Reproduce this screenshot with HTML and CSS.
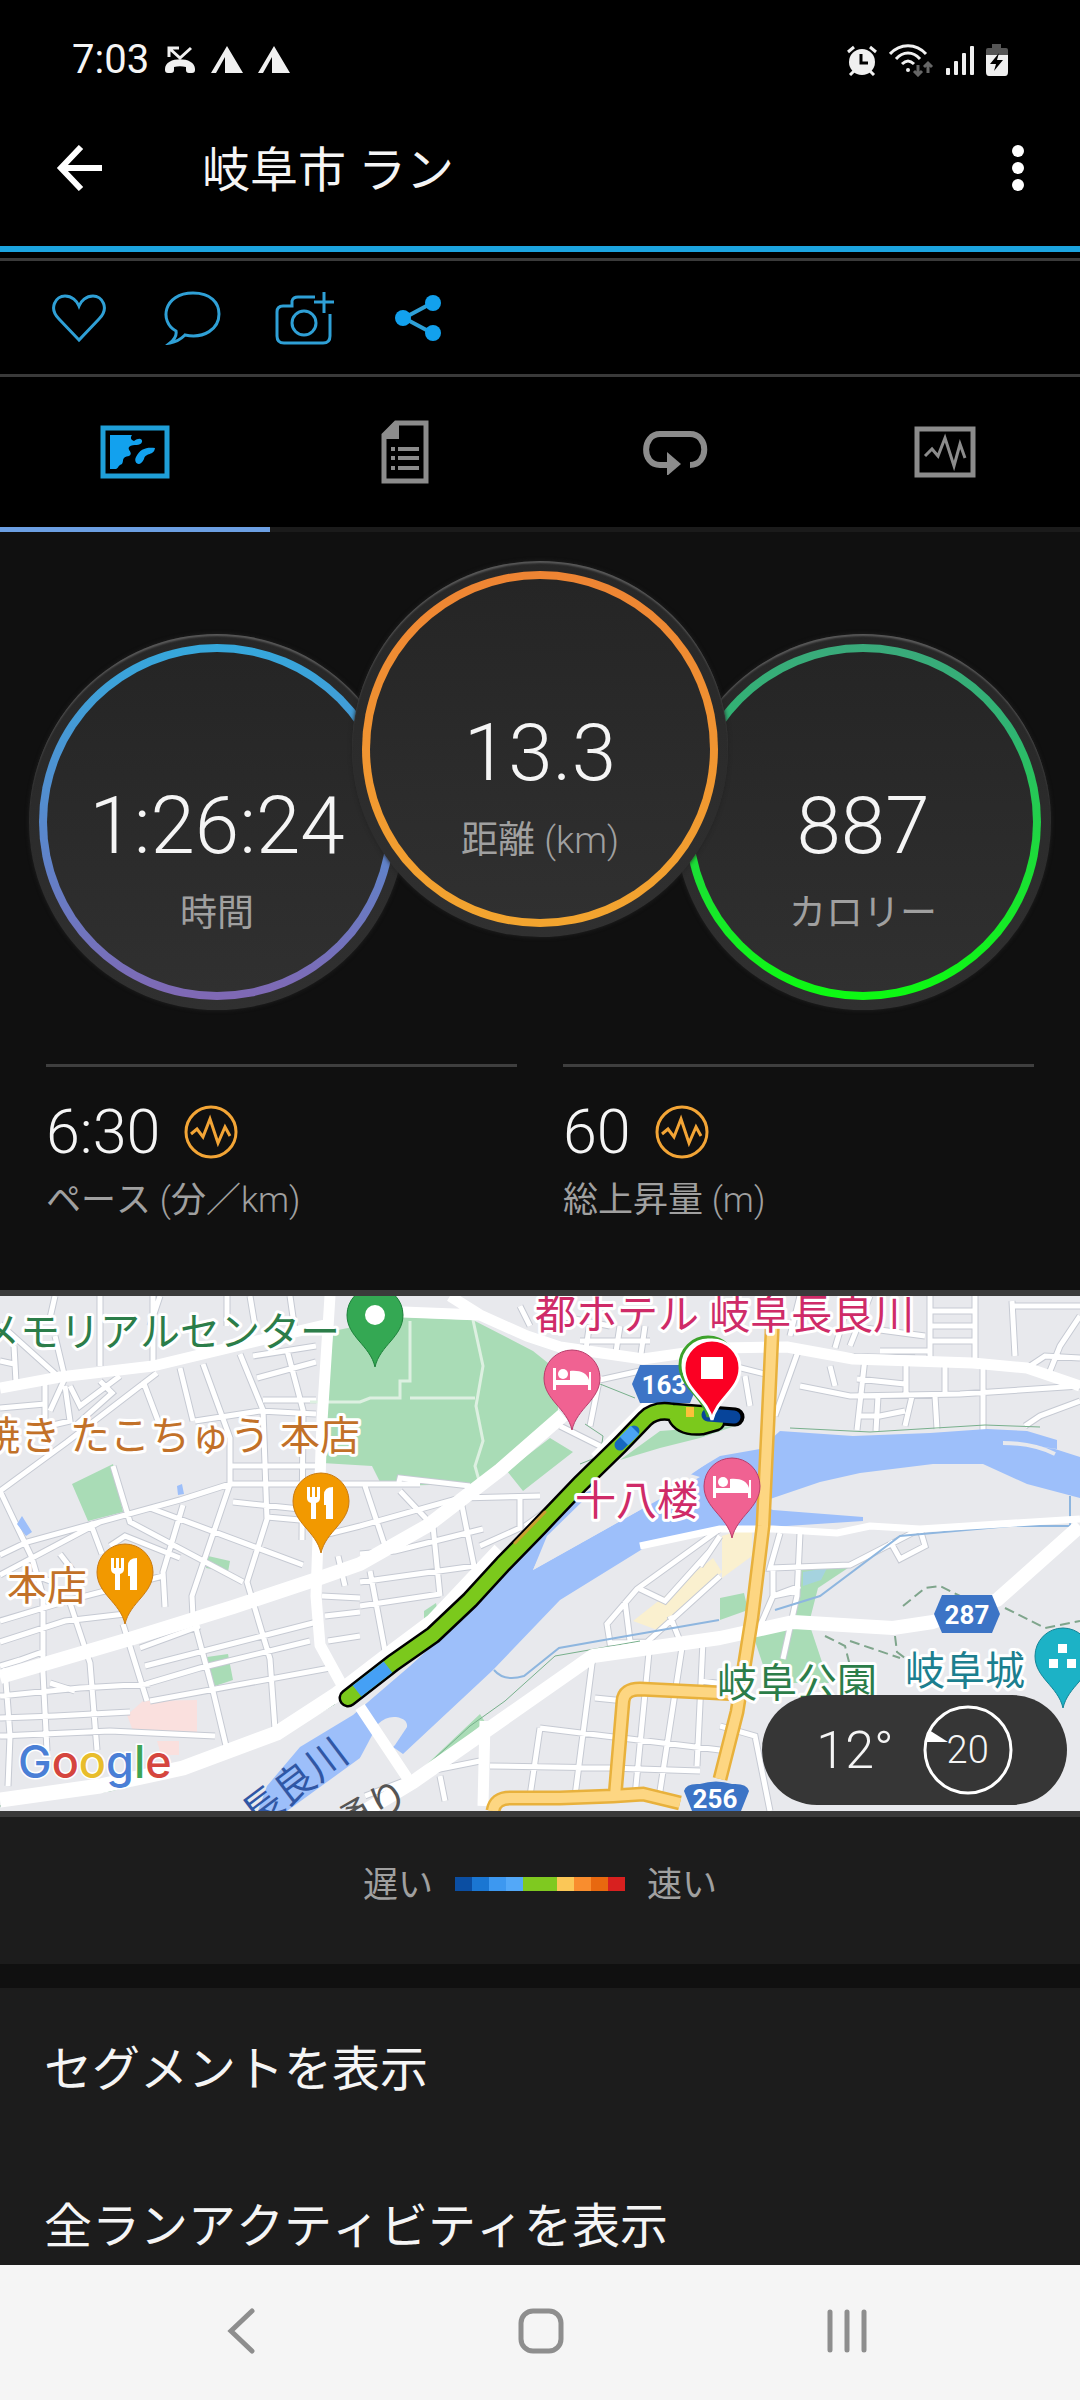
FILE: index.html
```html
<!DOCTYPE html>
<html lang="ja">
<head>
    <meta charset="UTF-8">
    <meta name="viewport" content="width=device-width, initial-scale=1.0">
    <title>岐阜市 ラン</title>
    <link rel="stylesheet" href="styles.css">
</head>
<body>
    <div class="status-bar">
        <div class="status-left">
            <span class="clock">7:03</span>
            <svg width="32" height="32" viewBox="0 0 32 32" fill="none" stroke="#f0f0f0" stroke-width="3">
                <path d="M5 13V4h10M5 4l11 10L27 4"/>
                <path d="M1 25c0-13 30-13 30 0v1c0 2-1 3-3 3h-3c-2 0-3-1-3-3v-3c-4-1-8-1-12 0v3c0 2-1 3-3 3H4c-2 0-3-1-3-3z" fill="#f0f0f0" stroke="none"/>
            </svg>
            <svg width="32" height="32" viewBox="0 0 32 32" fill="#f0f0f0"><path d="M16 2l16 27H14V13L5 29H0z"/></svg>
            <svg width="32" height="32" viewBox="0 0 32 32" fill="#f0f0f0"><path d="M16 2l16 27H14V13L5 29H0z"/></svg>
        </div>
        <div class="status-right">
            <svg width="30" height="32" viewBox="0 0 30 32" fill="none" stroke="#f0f0f0" stroke-width="4">
                <circle cx="15" cy="18" r="13" fill="#f0f0f0" stroke="none"/>
                <path d="M1 8l6-5M29 8l-6-5M3 31l4-4M27 31l-4-4" stroke-width="3"/>
                <path d="M14 10v9h7" stroke="#000" stroke-width="3"/>
            </svg>
            <svg width="45" height="34" viewBox="0 0 45 34" fill="none" stroke="#f0f0f0" stroke-width="3">
                <path d="M1 11c10-11 26-11 36 0M7 16c7-8 17-8 24 0M13 21c4-4 8-4 12 0"/>
                <circle cx="19" cy="27" r="2" fill="#f0f0f0" stroke="none"/>
                <path d="M29 22v10m-4-4l4 4 4-4M39 30V20m-4 4l4-4 4 4" stroke="#666"/>
            </svg>
            <svg width="28" height="32" viewBox="0 0 28 32" fill="#f0f0f0">
                <rect y="24" width="4" height="7" rx="1"/><rect x="8" y="17" width="4" height="14" rx="1"/>
                <rect x="16" y="9" width="4" height="22" rx="1"/><rect x="24" y="2" width="4" height="29" rx="1"/>
            </svg>
            <svg width="22" height="34" viewBox="0 0 22 34">
                <path d="M6 1h9v4h5q2 0 2 2v6H0V7q0-2 2-2h4z" fill="#555"/>
                <path d="M0 12h22v17q0 4-3 4H3q-3 0-3-4z" fill="#f0f0f0"/>
                <path d="M13 10L4 21h6L8 28l9-11h-6z"/>
            </svg>
        </div>
    </div>

    <header class="header">
        <button class="icon-button" aria-label="戻る">
            <svg width="46" height="46" viewBox="0 0 46 46" fill="none" stroke="#fff" stroke-width="6"><path d="M25 2L5 23l20 21M5 23h41"/></svg>
        </button>
        <h1>岐阜市 ラン</h1>
        <button class="icon-button" aria-label="メニュー">
            <svg width="12" height="48" viewBox="0 0 12 48" fill="#fff"><circle cx="6" cy="7" r="6"/><circle cx="6" cy="24" r="6"/><circle cx="6" cy="41" r="6"/></svg>
        </button>
    </header>

    <div class="actions">
        <button aria-label="いいね">
            <svg width="56" height="54" viewBox="0 0 56 54"><path d="M28 49L8 28C-3 17 5 5 14 5c7 0 12 5 14 10 2-5 7-10 14-10 9 0 17 12 6 23z"/></svg>
        </button>
        <button aria-label="コメント">
            <svg width="58" height="54" viewBox="0 0 58 54"><path d="M7 52c5-4 7-7 6-12C-4 31 0 2 30 2c18 0 26 10 26 21 0 15-15 25-34 21-4 4-9 7-15 8z"/></svg>
        </button>
        <button aria-label="写真を追加">
            <svg width="62" height="56" viewBox="0 0 62 56"><path d="M41 7H24q-5 0-6 4v5H9q-6 0-6 6v24q0 7 7 7h39q7 0 7-7V24M50 2v21M40 12h20"/><circle cx="30" cy="33" r="12"/></svg>
        </button>
        <button aria-label="共有">
            <svg width="46" height="48" viewBox="0 0 46 48"><path d="M37 9L9 24l28 15" stroke-width="4"/><g fill="#12a1ee" stroke="none"><circle cx="38" cy="9" r="8"/><circle cx="8" cy="24" r="8"/><circle cx="38" cy="39" r="8"/></g></svg>
        </button>
    </div>

    <nav class="tabs">
        <button class="tab active" aria-label="マップ">
            <svg width="70" height="54" viewBox="0 0 70 54">
                <rect x="3" y="3" width="64" height="48" fill="none" stroke="#1f9fd8" stroke-width="5"/>
                <path d="M10 10h22c-2 3-1 5 2 6 5-4 9-2 8 1-2 5-8 1-13 5-2 3 5 6 0 9-8 1-5 5-7 8-5 2-3 4-6 5h-6z" fill="#12a1ee"/>
                <path d="M55 23c-1 8-9 4-11 11-4 9-11 4-8-2 4-8 10-10 19-9z" fill="#12a1ee"/>
            </svg>
        </button>
        <button class="tab" aria-label="詳細">
            <svg width="48" height="64" viewBox="0 0 48 64" fill="none" stroke="#8c8c8c" stroke-width="5">
                <path d="M15 3h30v58H3V15z"/><path d="M18 2v17H2v-5L13 2z" fill="#8c8c8c" stroke="none"/>
                <path d="M10 29h4m3 0h21M10 38h4m3 0h21M10 48h4m3 0h21" stroke-width="4"/>
            </svg>
        </button>
        <button class="tab" aria-label="ラップ">
            <svg width="66" height="46" viewBox="0 0 66 46" fill="none" stroke="#8c8c8c" stroke-width="6">
                <path d="M26 36H18C-1 36 0 5 18 5h30c19 0 19 31 0 31"/><path d="M25 23l14 12-14 12z" fill="#8c8c8c" stroke="none"/>
            </svg>
        </button>
        <button class="tab" aria-label="チャート">
            <svg width="62" height="52" viewBox="0 0 62 52" fill="none" stroke="#8c8c8c">
                <rect x="3" y="3" width="56" height="46" stroke-width="5"/><path d="M11 30l7-7 6 7 7-18 9 28 6-22 5 14" stroke-width="3"/>
            </svg>
        </button>
    </nav>

    <main class="content">
        <section class="gauges">
            <div class="gauge">
                <div class="ring ring-time"><span class="value">1:26:24</span><span class="label">時間</span></div>
            </div>
            <div class="gauge gauge-main">
                <div class="ring ring-distance"><span class="value">13.3</span><span class="label">距離 <span class="unit">(km)</span></span></div>
            </div>
            <div class="gauge">
                <div class="ring ring-calories"><span class="value">887</span><span class="label">カロリー</span></div>
            </div>
        </section>

        <section class="stats">
            <div class="stat">
                <div class="stat-value">6:30
                    <svg width="54" height="54" viewBox="0 0 54 54" fill="none" stroke="#f3a536" stroke-width="3"><circle cx="27" cy="27" r="25"/><path d="M7 29l6-5 6 8 7-18 8 24 7-16 5 9"/></svg>
                </div>
                <div class="label">ペース <span class="unit">(</span>分／<span class="unit">km)</span></div>
            </div>
            <div class="stat">
                <div class="stat-value">60
                    <svg width="54" height="54" viewBox="0 0 54 54" fill="none" stroke="#f3a536" stroke-width="3"><circle cx="27" cy="27" r="25"/><path d="M7 29l6-5 6 8 7-18 8 24 7-16 5 9"/></svg>
                </div>
                <div class="label">総上昇量 <span class="unit">(m)</span></div>
            </div>
        </section>

        <section class="map">
            <svg class="map-canvas" viewBox="0 0 1080 515" preserveAspectRatio="xMidYMid slice">
                <defs>
                    <path id="pin" d="M0 52C-5 30-28 22-28 0A28 28 0 1 1 28 0C28 22 5 30 0 52Z"/>
                    <path id="fork" fill="#fff" d="M-14-14h3v10h2v-10h3v10h2v-10h3V-3q0 4-4 5v16h-5V2q-4-1-4-5zM5 18V4H3V-6q0-8 9-8v32z"/>
                    <g id="bed" fill="#fff"><path d="M-19-10h3V2h33v-8h2v18h-3V7h-32v5h-3z"/><circle cx="-9" cy="-4" r="5"/><path d="M-2 2v-9C8-8 15-5 17 2z"/></g>
                    <path id="badge" d="M-25-19h50L33 0 25 19h-50L-33 0z"/>
                    <path id="trunk" d="M773 0L772 37 768 125 763 230 752 321 737 416 720 483M493 515Q495 502 510 502L560 502 613 500 643 498 680 507M615 500L623 405Q624 393 640 393L720 397 740 398"/>
                    <path id="streets" d="M0 195L67 146 157 77M0 259L27 246 180 204 230 188M0 195L32 262 43 300V377L47 455M0 279L100 226M113 170L130 226 243 286M150 212L303 269M183 209L163 276 165 311M230 188L192 300 193 321 213 395 227 454M203 68L230 142V188M180 72L193 125M240 58L263 114 267 223 247 286 270 363 275 433M287 54L303 114 302 244M253 60L316 50M257 82L316 66M263 104H316M195 125L260 115 316 118M230 170H322M230 188H420M233 206L300 213M267 221L300 224M70 307L90 367 97 454M90 226L102 258M123 328L147 405M0 325L70 304 163 280M0 346L65 325 125 318M0 370L20 364 45 355M50 387L75 395M140 352L200 330M145 370L317 326M146 388L200 372 310 345M150 405L330 372M0 400L80 392 150 388M0 422L55 420 130 416M0 440L110 435 215 440M5 372L10 440 8 490M55 40L65 82 50 115M0 28L60 82M14 50L16 86M0 65L14 68M100 0V70M153 0V70M227 0V30M250 0L255 30M290 0L295 35M45 85V130M65 90L70 125 40 132M70 90L80 110 120 80M0 112L45 108M100 85L112 97 75 130M143 85L160 130M160 0L150 30M55 0L50 22M60 258L80 284M28 277L50 285M110 250L125 240 180 262M365 190L385 250M400 195L433 230 440 300M460 200L475 275M360 230L460 202 540 200M360 258L395 255 483 233M360 286L475 270M360 310L440 298M370 275L385 355M520 200V232L480 250M525 230L560 205M398 190L400 182 470 190M322 300L360 302M325 320L360 316M328 345L360 340M338 260L345 290M320 240L360 230M540 0L550 30M590 25L585 60M620 30L615 62M645 30L640 65M580 45H650M560 20L610 30M520 10L530 30M600 80L590 130M560 130L600 150M640 75L595 85M800 50L775 120M733 70L765 78M745 80L750 110M800 90L850 100 960 98 1080 90M865 62L857 134M906 65V98M945 70L945 98M983 72L983 135M935 100L937 133M878 100L876 135M912 100L905 130M857 83L905 88M857 120H880L905 115M835 52L845 18 840 0M850 50L870 0M880 55L930 55M930 0V65M975 0L975 65M1012 5L1015 60M930 15H975M930 30H975M930 45H975M800 0L790 40M1010 10L1080 10M1080 20L1060 50 1050 75M1027 72L1045 60 1080 62M1025 130L1040 120 1080 105M830 70L835 90M850 30L925 40M835 60L915 62M800 237L797 300 783 363M773 300L797 295M773 272V300L760 330M780 237L770 272 850 269 920 233M773 300L800 290M890 245L900 263 925 250 920 233M593 360L575 500M650 346L635 500M683 345L660 495M703 345L697 470M540 432L720 454M490 470L610 472 700 475M540 432L530 500M595 402L625 405M700 385L725 388M720 430L755 440 770 515M365 500L430 475 480 465M440 480L445 505M720 233L637 293 607 328 610 347 647 346 720 280M625 305L630 345M640 293L665 305 710 255M670 320L680 345M720 240L700 270"/>
                </defs>
                <rect width="1080" height="515" fill="#e8e9ed"/>

                <!-- parks -->
                <g fill="#a9dcb6">
                    <path d="M333 35L403 21 473 24 533 55 558 75V118L477 188 382 190 372 170 322 167z"/>
                    <path d="M550 142L573 156 523 195 507 175zM72 188L113 168 123 216 88 225zM208 260l22 5-2 11-22-4zM207 361l21-3 5 26-21 7z"/>
                    <path d="M620 164L660 135 700 132 735 130 700 142 660 152zM408 486L480 418 485 426 420 478zM800 272h48l-30 20-9 35 20 60h-60l-15-45 38-20z"/>
                    <path d="M720 302l24-5 4 17-28 10zM424 315l12-8 2 10-14 12z"/>
                </g>
                <path d="M633 325L713 262 722 276 660 335zM722 240l30-10v30l-30 22z" fill="#faf0cf"/>
                <path d="M127 419l16-14 54-1v33l-64-2zM157 445h22v14h-18z" fill="#fae0de"/>
                <path d="M803 276l24-4-6 12-18 6z" fill="#a5d3df"/>

                <!-- side streets -->
                <use href="#streets" fill="none" stroke="#c6cad3" stroke-width="7"/>
                <use href="#streets" fill="none" stroke="#fff" stroke-width="5"/>

                <!-- river -->
                <g fill="#9dbffa">
                    <path d="M1080 161L1055 153 1010 146 1057 153V144L1027 135 987 133 930 137 853 140 780 135 760 153 720 160 690 178 700 181 640 214 533 274 547 240 590 198 600 192 580 198 533 245 470 315 410 370 375 400 353 419 300 451 267 490 258 515H287L360 462 393 423 407 430 393 451 403 458 493 374 560 304 657 244 700 235 787 230 863 225V221L773 214 757 208 773 202 820 186 860 177 933 168 983 168 1027 188 1080 202z"/>
                    <path d="M17 228l5-8 10 16-6 4zM177 190l5-2 2 10-6 1z"/>
                </g>
                <path d="M533 274L548 242 600 196 720 150 706 168 640 214z" fill="#e8e9ed"/>
                <path d="M360 462l18-34q8-8 18-7 12 2 11 10l-12 18-8 8z" fill="#e8e9ed"/>
                <path d="M1003 147q30 0 52 11" fill="none" stroke="#e8e9ed" stroke-width="4"/>
                <path d="M494 374q10 12 30 6l35-28 45-8 115-20M775 314l45-14 80-60 110-10h60V200" fill="none" stroke="#8eb6df" stroke-width="2"/>
                <path d="M0 510L110 495 190 475 280 440 335 408M410 485L470 430 505 405 555 360 640 345M790 132L870 136 985 129 1040 131M600 88L635 102M585 128L603 140 600 160 580 168" fill="none" stroke="#78b08c" stroke-width="1"/>
                <path d="M903 310L925 292 940 290 960 300M825 340L845 350 850 370M850 345L900 362M895 340L897 356 905 362M1005 312L1045 332 1080 325" fill="none" stroke="#7fa58c" stroke-width="2" stroke-dasharray="10 5"/>
                <path d="M410 25v60h-10v17h-30l-10 4h-50M410 102h65M473 24L483 70 476 110 483 145 475 170 480 188" fill="none" stroke="#ddf0e1" stroke-width="3"/>

                <!-- main roads -->
                <g fill="none" stroke="#fff" stroke-width="11" stroke-linejoin="round">
                    <path d="M0 92L60 81 153 70 253 46 333 27M330 0L322 125 316 300 320 349 343 391M403 16L480 19 527 40 560 51 643 63 720 52 787 51 853 63 973 67 1027 72 1080 90M450 0L480 19"/>
                    <path d="M0 381L133 342 233 311 317 283 360 268 427 230 500 174 563 119" stroke-width="14"/>
                    <path d="M0 504L100 490 183 472 277 437 337 398 393 355 433 325 500 254" stroke-width="15"/>
                    <path d="M365 515L413 486 593 360 720 342 793 326 893 332 933 326 997 304 1080 230" stroke-width="14"/>
                    <path d="M360 411L410 486M485 425L483 510M595 162L655 102"/>
                    <path d="M640 250L720 233 773 233 837 237 870 230 920 233 1080 223" stroke-width="7"/>
                </g>

                <!-- national roads -->
                <use href="#trunk" fill="none" stroke="#e8b13c" stroke-width="15"/>
                <use href="#trunk" fill="none" stroke="#fdd682" stroke-width="10"/>

                <!-- road numbers -->
                <g fill="#3c74c6">
                    <use href="#badge" x="665" y="88"/>
                    <use href="#badge" x="967" y="318"/>
                    <path d="M684 495Q686 487 700 488 716 483 732 488 747 487 749 495L741 515H692z"/>
                </g>
                <g class="road-number">
                    <text x="664" y="98">163</text>
                    <text x="967" y="328">287</text>
                    <text x="715" y="512">256</text>
                </g>

                <!-- activity track -->
                <g fill="none" stroke-linecap="round" stroke-linejoin="round">
                    <path d="M348 402L393 367 433 339 470 304 503 268 540 230 580 188 620 149 645 123Q655 113 672 116L735 121M676 120Q682 132 702 130L716 126" stroke="#000" stroke-width="19"/>
                    <path d="M348 402L393 367 433 339 470 304 503 268 540 230 580 188 620 149 645 123Q655 113 672 116L712 119M676 120Q682 132 702 130L716 126" stroke="#7bc91c" stroke-width="14"/>
                    <path d="M357 395L388 371" stroke="#45a0f5" stroke-width="14" stroke-linecap="butt"/>
                    <path d="M620 149L634 135" stroke="#1768c0" stroke-width="11"/>
                    <path d="M624 145L635 134" stroke="#4ba4f4" stroke-width="12" stroke-linecap="butt"/>
                    <path d="M515 247L545 216" stroke="#c99f32" stroke-width="3"/>
                    <path d="M686 116H694" stroke="#fbc13a" stroke-width="10" stroke-linecap="butt"/>
                    <path d="M708 119L734 121" stroke="#07449a" stroke-width="13"/>
                </g>

                <!-- places -->
                <g class="place">
                    <text class="park" x="340" y="50" text-anchor="end">メモリアルセンター</text>
                    <text class="food" x="360" y="154" text-anchor="end">焼き たこちゅう 本店</text>
                    <text class="food" x="7" y="304">本店</text>
                    <text class="hotel" x="535" y="33">都ホテル 岐阜長良川</text>
                    <text class="hotel" x="575" y="219">十八楼</text>
                    <text class="park" x="717" y="401">岐阜公園</text>
                    <text class="sight" x="905" y="389">岐阜城</text>
                </g>
                <g class="along">
                    <text class="river" transform="translate(255 535) rotate(-37)">長良川</text>
                    <text transform="translate(343 546) rotate(-30)">通り</text>
                </g>

                <!-- pins -->
                <g transform="translate(321 205)"><use href="#pin" fill="#f29900" stroke="#c97b12"/><use href="#fork"/></g>
                <g transform="translate(125 276)"><use href="#pin" fill="#f29900" stroke="#c97b12"/><use href="#fork"/></g>
                <g transform="translate(375 19)"><use href="#pin" fill="#34a853" stroke="#1b8039"/><circle r="10" fill="#fff"/></g>
                <g transform="translate(572 82)"><use href="#pin" fill="#f06292" stroke="#b83d6b"/><use href="#bed"/></g>
                <g transform="translate(732 190)"><use href="#pin" fill="#f06292" stroke="#b83d6b"/><use href="#bed"/></g>
                <g transform="translate(1063 360)"><use href="#pin" fill="#1cb2c6" stroke="#158496"/><path d="M-5-12h9v9h-9zM-14 3h9v9h-9zM4 3h9v9H4z" fill="#fff"/></g>
                <g transform="translate(708 69)"><use href="#pin" fill="#fff" stroke="#3da22b" stroke-width="3"/></g>
                <g transform="translate(712 72)"><use href="#pin" fill="#fb0023" stroke="#fff" stroke-width="3"/><path d="M-11-11h22v22h-22z" fill="#fff"/></g>

                <text class="google" x="18" y="482"><tspan fill="#4a7fd6">G</tspan><tspan fill="#d5453e">o</tspan><tspan fill="#e8bd2c">o</tspan><tspan fill="#4a7fd6">g</tspan><tspan fill="#3da556">l</tspan><tspan fill="#d5453e">e</tspan></text>
            </svg>
            <div class="weather">
                <span>12°</span>
                <div class="wind">
                    <svg width="90" height="90" viewBox="0 0 90 90"><circle cx="45" cy="45" r="43" fill="none" stroke="#fff" stroke-width="3"/><path d="M6 25l19 12H2z" fill="#fff"/></svg>
                    <span>20</span>
                </div>
            </div>
        </section>

        <section class="legend">
            <span>遅い</span>
            <div class="scale"><i class="s1"></i><i class="s2"></i><i class="s3"></i><i class="s4"></i><i class="s5"></i><i class="s5"></i><i class="s6"></i><i class="s7"></i><i class="s8"></i><i class="s9"></i></div>
            <span>速い</span>
        </section>

        <section class="links">
            <a href="#">セグメントを表示</a>
            <a href="#">全ランアクティビティを表示</a>
        </section>
    </main>

    <nav class="system-nav">
        <button aria-label="戻る"><svg width="30" height="46" viewBox="0 0 30 46"><path d="M26 3L5 23l21 20"/></svg></button>
        <button aria-label="ホーム"><svg width="46" height="46" viewBox="0 0 46 46"><rect x="3" y="3" width="40" height="40" rx="12"/></svg></button>
        <button aria-label="履歴"><svg width="42" height="46" viewBox="0 0 42 46"><path d="M4 4v38M21 4v38M38 4v38"/></svg></button>
    </nav>
</body>
</html>
```

FILE: styles.css
```css
* {
    box-sizing: border-box;
}
body {
    margin: 0;
    height: 100vh;
    display: flex;
    flex-direction: column;
    background: #000;
    color: #f5f5f5;
    font-family: Roboto, "Noto Sans CJK JP", sans-serif;
    font-kerning: none;
    overflow: hidden;
}
button {
    display: flex;
    align-items: center;
    justify-content: center;
    padding: 0;
    border: none;
    background: none;
    cursor: pointer;
}
svg {
    display: block;
    flex-shrink: 0;
}
.status-bar {
    display: flex;
    justify-content: space-between;
    height: 90px;
    padding: 30px 72px 0;
    flex-shrink: 0;
}
.status-left,
.status-right {
    display: flex;
    align-items: center;
    gap: 15px;
}
.status-right {
    gap: 12px;
}
.clock {
    font-size: 40px;
    line-height: 40px;
}
.header {
    display: flex;
    align-items: center;
    height: 162px;
    padding: 0 56px;
    border-bottom: 6px solid #1ca4e0;
    flex-shrink: 0;
}
.header h1 {
    flex: 1;
    margin: 0 0 0 100px;
    padding-top: 6px;
    font-size: 48px;
    line-height: 60px;
    font-weight: 400;
}
.actions {
    display: flex;
    height: 119px;
    margin-top: 6px;
    padding-left: 22px;
    border-top: 3px solid #3a3a3a;
    border-bottom: 3px solid #3a3a3a;
    flex-shrink: 0;
}
.actions button {
    width: 113px;
}
.actions svg {
    fill: none;
    stroke: #2fa0d6;
    stroke-width: 3px;
}
.tabs {
    display: grid;
    grid-template-columns: repeat(4, 1fr);
    height: 155px;
    flex-shrink: 0;
}
.tab {
    border-bottom: 5px solid #1b1b1b;
}
.tab.active {
    border-bottom-color: #6c9fe2;
}
.content {
    flex: 1;
    min-height: 0;
    overflow: hidden;
    background: #101010;
}
.gauges {
    display: flex;
    justify-content: center;
    align-items: flex-end;
    padding: 29px 0 54px;
}
.gauge {
    width: 376px;
    height: 376px;
    padding: 10px;
    border-radius: 50%;
    background: linear-gradient(#272727, #303030);
    box-shadow: inset 0 3px 2px -1px #5a5a5a, 0 0 4px #222;
}
.gauge-main {
    position: relative;
    margin: 0 -53px 73px;
}
.ring {
    display: flex;
    flex-direction: column;
    align-items: center;
    gap: 28px;
    height: 100%;
    padding-top: 134px;
    border: 8px solid transparent;
    border-radius: 50%;
}
.ring-time {
    background: linear-gradient(#252525, #303030) padding-box, linear-gradient(#35a8dc, #5b86cc 55%, #8068b4) border-box;
}
.ring-distance {
    background: linear-gradient(#252525, #303030) padding-box, linear-gradient(#ee8433, #f3a52f) border-box;
}
.ring-calories {
    background: linear-gradient(#252525, #303030) padding-box, linear-gradient(#3aaa7b, #2fb472 25%, #1cdd38 60%, #0dfa12) border-box;
}
.value {
    font-size: 80px;
    line-height: 80px;
    font-weight: 300;
}
.label {
    font-size: 37px;
    line-height: 40px;
    color: #a0a0a0;
}
.unit {
    font-weight: 300;
}
.stats {
    display: grid;
    grid-template-columns: 1fr 1fr;
    gap: 46px;
    padding: 0 46px 67px;
}
.stat {
    padding-top: 35px;
    border-top: 3px solid #3f3f3f;
}
.stat-value {
    display: flex;
    align-items: center;
    gap: 24px;
    margin-bottom: 17px;
    font-size: 61px;
    line-height: 60px;
    font-weight: 300;
}
.stat .label {
    font-size: 35px;
    line-height: 44px;
}
.map {
    position: relative;
    border-top: 6px solid #3a3a3a;
    border-bottom: 6px solid #3a3a3a;
}
.map-canvas {
    width: 100%;
    height: 515px;
}
.place text {
    font-size: 40px;
    stroke: #fff;
    stroke-width: 6px;
    stroke-linejoin: round;
    paint-order: stroke;
}
.park {
    fill: #2b7d49;
}
.food {
    fill: #c27128;
}
.place .hotel {
    fill: #cf2b68;
    font-size: 41px;
}
.sight {
    fill: #1c7f8f;
}
.along text {
    font-size: 40px;
    fill: #555;
}
.along .river {
    fill: #3057a5;
}
.road-number {
    font-size: 26px;
    font-weight: 700;
    fill: #fff;
    text-anchor: middle;
}
.google {
    font-family: Inter, sans-serif;
    font-size: 45px;
    font-weight: 500;
    stroke: #fff;
    stroke-width: 3px;
    paint-order: stroke;
}
.weather {
    position: absolute;
    right: 13px;
    bottom: 6px;
    display: flex;
    align-items: center;
    justify-content: center;
    gap: 29px;
    width: 305px;
    height: 110px;
    border-radius: 55px;
    background: #363636;
    font-size: 52px;
    font-weight: 300;
}
.wind {
    display: grid;
    place-items: center;
    font-size: 38px;
}
.wind > * {
    grid-area: 1 / 1;
}
.legend {
    display: flex;
    justify-content: center;
    align-items: center;
    gap: 22px;
    padding: 45px 0 58px;
    background: #1c1c1c;
    color: #a0a0a0;
    font-size: 35px;
    line-height: 40px;
}
.legend span {
    padding-top: 4px;
}
.scale {
    display: flex;
}
.scale i {
    width: 17px;
    height: 14px;
}
.s1 { background: #0b4ea2; }
.s2 { background: #1a76d2; }
.s3 { background: #3d98f0; }
.s4 { background: #53a8f8; }
.s5 { background: #7fc920; }
.s6 { background: #fbc757; }
.s7 { background: #f98d2e; }
.s8 { background: #e8680f; }
.s9 { background: #d8201f; }
.links {
    margin-top: 24px;
    padding-top: 3px;
    background: #1c1c1c;
}
.links a {
    display: block;
    padding: 0 44px;
    font-size: 48px;
    line-height: 157px;
    color: #f5f5f5;
    text-decoration: none;
}
.system-nav {
    display: flex;
    align-items: center;
    justify-content: space-between;
    height: 135px;
    padding: 0 212px 4px 226px;
    background: #f5f5f5;
    flex-shrink: 0;
}
.system-nav svg {
    fill: none;
    stroke: #8e8e8e;
    stroke-width: 5px;
    stroke-linecap: round;
}
```
